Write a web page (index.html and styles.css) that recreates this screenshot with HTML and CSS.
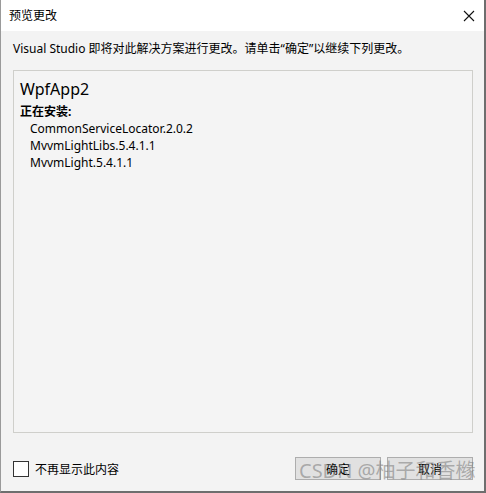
FILE: index.html
```html
<!DOCTYPE html>
<html lang="zh-CN">
<head>
<meta charset="utf-8">
<title>预览更改</title>
<link rel="stylesheet" href="styles.css">
</head>
<body>
<div class="window">
  <div class="titlebar">
    <span class="title">预览更改</span>
    <span class="close">
      <svg width="12" height="12" viewBox="0 0 12 12"><path d="M1 1L11 11M11 1L1 11" stroke="#111" stroke-width="1.1" fill="none"/></svg>
    </span>
  </div>
  <div class="content">
    <p class="desc">Visual Studio 即将对此解决方案进行更改。请单击“确定”以继续下列更改。</p>
    <div class="panel">
      <div class="project">WpfApp2</div>
      <div class="section">正在安装:</div>
      <ul class="items">
        <li>CommonServiceLocator.2.0.2</li>
        <li>MvvmLightLibs.5.4.1.1</li>
        <li>MvvmLight.5.4.1.1</li>
      </ul>
    </div>
    <div class="footer">
      <label class="check"><span class="box"></span>不再显示此内容</label>
      <div class="buttons">
        <button class="btn">确定</button>
        <button class="btn">取消</button>
      </div>
    </div>
  </div>
  <div class="watermark">CSDN @柚子和香橼</div>
</div>
</body>
</html>
```
FILE: styles.css
```css
* { box-sizing: border-box; }
html, body { margin: 0; padding: 0; background: #fff; }
body {
  font-family: "Segoe UI", "Noto Sans", "Noto Sans CJK SC", sans-serif;
  font-size: 12px;
  color: #000;
}
.window {
  position: relative;
  width: 486px;
  height: 493px;
  display: flex;
  flex-direction: column;
  background: #f3f3f3;
  border-left: 1px solid #9a9a9a;
  border-right: 2px solid #6e6e6e;
  border-bottom: 2px solid #6e6e6e;
}
.titlebar {
  height: 31px;
  background: #fff;
  display: flex;
  align-items: center;
  justify-content: space-between;
  padding: 0 9px 0 8px;
}
.title { font-size: 12px; line-height: 16px; }
.close { display: flex; width: 12px; height: 12px; margin-right: 0; }
.content {
  flex: 1;
  display: flex;
  flex-direction: column;
  padding: 0 11px 0 12px;
}
.desc {
  margin: 10px 0 0 0;
  line-height: 16px;
  height: 29px;
}
.panel {
  height: 363px;
  border: 1px solid #cfcfcb;
  background: #f4f4f4;
  padding: 6px 6px;
}
.project { font-size: 16px; line-height: 24px; }
.section { font-weight: bold; margin-top: 2px; line-height: 17px; }
.items { list-style: none; margin: 0; padding: 0 0 0 10px; }
.items li { line-height: 17px; }
.footer {
  flex: 1;
  display: flex;
  align-items: flex-start;
  justify-content: space-between;
  padding-top: 24px;
}
.check { display: flex; align-items: center; gap: 6px; margin-top: 3px; }
.box {
  width: 16px; height: 16px;
  border: 1px solid #333;
  background: #fff;
}
.buttons { display: flex; gap: 6px; }
.btn {
  width: 86px; height: 23px;
  border: 1px solid #adadad;
  background: #e1e1e1;
  font: inherit;
  color: #000;
  padding: 0;
}
.watermark {
  position: absolute;
  left: 298px;
  top: 455px;
  font-family: "Noto Sans", "Noto Sans CJK SC", sans-serif;
  font-size: 20px;
  color: rgba(120,120,120,0.55);
  white-space: nowrap;
  pointer-events: none;
}
```
